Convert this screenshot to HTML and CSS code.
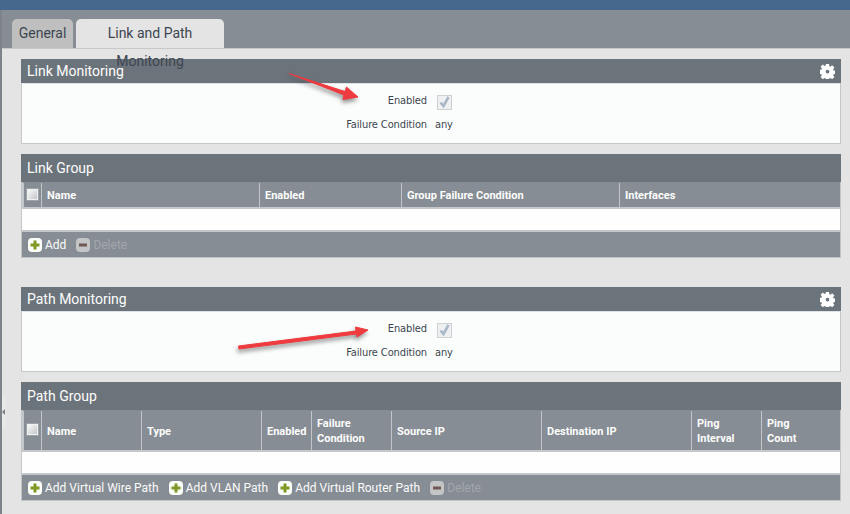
FILE: index.html
```html
<!DOCTYPE html>
<html lang="en">
<head>
<meta charset="utf-8">
<title>Link and Path Monitoring</title>
<link rel="stylesheet" href="styles.css">
</head>
<body>
<svg width="0" height="0" class="defs">
  <defs>
    <symbol id="gear" viewBox="0 0 16 16">
      <path fill="#fff" fill-rule="evenodd" d="M6.300 0h3.400l.3 2.300 1.100.5 1.900-1.400 2.400 2.400-1.400 1.900.5 1.100 2.300.3v3.400l-2.300.3-.5 1.100 1.400 1.900-2.400 2.400-1.900-1.400-1.100.5-.3 2.300H6.300l-.3-2.300-1.100-.5-1.900 1.400-2.400-2.400 1.400-1.900-.5-1.100-2.300-.3V6.300l2.300-.3.5-1.100-1.400-1.900 2.400-2.400 1.900 1.400 1.100-.5zM8 6a2 2 0 1 0 0 4 2 2 0 0 0 0-4z"/>
    </symbol>
    <symbol id="plus" viewBox="0 0 14 14">
      <rect x="0" y="0" width="14" height="14" rx="4" fill="#fbfdf8"/>
      <path fill="#7f9a22" d="M5.500 2.500h3v3h3v3h-3v3h-3v-3h-3v-3h3z"/>
    </symbol>
    <symbol id="minus" viewBox="0 0 14 14">
      <rect x="0" y="0" width="14" height="14" rx="4" fill="#c3c5c7"/>
      <rect x="3" y="5.500" width="8" height="3" fill="#6e5a52"/>
    </symbol>
    <symbol id="check" viewBox="0 0 15 15">
      <rect x="0.500" y="0.500" width="14" height="14" fill="#eef0f2" stroke="#cdd1d4"/>
      <path fill="none" stroke="#a9b8c6" stroke-width="2.600" d="M3.500 7.500l3 3.500 5-9"/>
    </symbol>
  </defs>
</svg>
<div class="topbar"></div>
<div class="dialog">
  <nav class="tabs">
    <div class="tab">General</div>
    <div class="tab tab-active">Link and Path Monitoring</div>
  </nav>
  <main class="content">
    <section class="panel">
      <header class="panel-title panel-title-short"><span>Link Monitoring</span><svg class="gear"><use href="#gear"/></svg></header>
      <div class="form">
        <div class="form-row"><span class="form-label">Enabled</span><svg class="check"><use href="#check"/></svg></div>
        <div class="form-row"><span class="form-label">Failure Condition</span><span class="form-value">any</span></div>
      </div>
    </section>
    <section class="panel panel-group">
      <header class="panel-title"><span>Link Group</span></header>
      <div class="grid-head link-cols">
        <div class="cell cell-check"><span class="head-check"></span></div>
        <div class="cell">Name</div>
        <div class="cell">Enabled</div>
        <div class="cell">Group Failure Condition</div>
        <div class="cell">Interfaces</div>
      </div>
      <div class="grid-body"></div>
      <div class="toolbar">
        <span class="tool"><svg class="tool-icon"><use href="#plus"/></svg>Add</span>
        <span class="tool tool-off"><svg class="tool-icon"><use href="#minus"/></svg>Delete</span>
      </div>
    </section>
    <section class="panel panel-second">
      <header class="panel-title panel-title-short"><span>Path Monitoring</span><svg class="gear"><use href="#gear"/></svg></header>
      <div class="form">
        <div class="form-row"><span class="form-label">Enabled</span><svg class="check"><use href="#check"/></svg></div>
        <div class="form-row"><span class="form-label">Failure Condition</span><span class="form-value">any</span></div>
      </div>
    </section>
    <section class="panel panel-group">
      <header class="panel-title"><span>Path Group</span></header>
      <div class="grid-head grid-head-tall path-cols">
        <div class="cell cell-check"><span class="head-check"></span></div>
        <div class="cell">Name</div>
        <div class="cell">Type</div>
        <div class="cell">Enabled</div>
        <div class="cell"><span>Failure<br>Condition</span></div>
        <div class="cell">Source IP</div>
        <div class="cell">Destination IP</div>
        <div class="cell"><span>Ping<br>Interval</span></div>
        <div class="cell"><span>Ping<br>Count</span></div>
      </div>
      <div class="grid-body"></div>
      <div class="toolbar">
        <span class="tool"><svg class="tool-icon"><use href="#plus"/></svg>Add Virtual Wire Path</span>
        <span class="tool"><svg class="tool-icon"><use href="#plus"/></svg>Add VLAN Path</span>
        <span class="tool"><svg class="tool-icon"><use href="#plus"/></svg>Add Virtual Router Path</span>
        <span class="tool tool-off"><svg class="tool-icon"><use href="#minus"/></svg>Delete</span>
      </div>
    </section>
  </main>
</div>
<div class="collapse-handle"></div>
<svg class="annotation" viewBox="0 0 850 514">
  <path d="M289 73.500L345 91.500 346.500 87 358 97 343 99.500 344 95z" fill="#ee3b3f" stroke="#ee3b3f" stroke-width="1" stroke-linejoin="round"/>
  <path d="M238.500 346L356 331 355.500 327 368 330 357 337 356.500 334 239 349z" fill="#ee3b3f" stroke="#ee3b3f" stroke-width="1" stroke-linejoin="round"/>
</svg>
</body>
</html>
```
FILE: styles.css
```css
* { box-sizing: border-box; }
html, body { margin: 0; padding: 0; }
body {
  width: 850px;
  height: 514px;
  overflow: hidden;
  position: relative;
  background: #e4e4e4;
  font-family: "DejaVu Sans Condensed", "DejaVu Sans", sans-serif;
  font-stretch: condensed;
  color: #3d4650;
}
.defs { position: absolute; }
.topbar { height: 10px; background: #46688d; }
.dialog { border-left: 2px solid #7e8389; height: 504px; }
.tabs {
  height: 38px;
  background: #878d94;
  padding: 9px 0 0 10px;
  display: flex;
  gap: 3px;
  align-items: stretch;
}
.tab {
  width: 61px;
  background: #bfbfbf;
  border-radius: 5px 5px 0 0;
  font-family: "Liberation Sans Narrow", Roboto, sans-serif;
  font-stretch: normal;
  font-size: 14px;
  line-height: 28px;
  text-align: center;
  color: #3d4650;
}
.tab-active { width: 148px; background: #e4e4e4; }
.content {
  border-top: 1px solid #c6c8ca;
  padding: 10px 9px 0 19px;
}
.panel-group { margin-top: 10px; }
.panel-second { margin-top: 29px; }
.panel-title {
  height: 28px;
  background: #6c747b;
  color: #fdfdfd;
  font-family: "Liberation Sans Narrow", Roboto, sans-serif;
  font-stretch: normal;
  font-size: 14px;
  padding: 0 6px;
  display: flex;
  justify-content: space-between;
  align-items: center;
}
.panel-title-short { height: 24px; }
.gear { width: 15px; height: 15px; }
.form {
  height: 61px;
  background: #fbfdfc;
  border: 1px solid #c4c8cb;
  border-top-color: #dfe3e6;
  padding-top: 4px;
  display: flex;
  flex-direction: column;
}
.form-row {
  height: 24px;
  display: flex;
  align-items: center;
  font-size: 11px;
  letter-spacing: -.12px;
}
.form-label { width: 405px; text-align: right; }
.form-value { margin-left: 8px; }
.check { width: 15px; height: 15px; margin: 4px 0 0 10px; }
.grid-head {
  height: 27px;
  background: #878d94;
  border-left: 2px solid #c2c6c9;
  border-right: 1px solid #c2c6c9;
  border-bottom: 2px solid #c4c8cb;
  display: grid;
  color: #fdfdfd;
  font-family: Roboto, sans-serif;
  font-stretch: normal;
  font-size: 11px;
  font-weight: 700;
}
.grid-head-tall { height: 42px; }
.link-cols { grid-template-columns: 18px 218px 142px 218px 1fr; }
.path-cols { grid-template-columns: 18px 100px 120px 50px 80px 150px 150px 70px 1fr; }
.cell {
  border-left: 1px solid #c2c6c9;
  margin-top: 1px;
  padding: 1px 5px 0;
  display: flex;
  align-items: center;
  line-height: 15px;
}
.cell-check { padding: 0 0 0 3px; }
.head-check {
  width: 11px;
  height: 11px;
  margin-top: -2px;
  background: linear-gradient(135deg, #f8f8f8, #c4c6c8);
  border: 1px solid #eef0f1;
  outline: 1px solid #9da2a7;
}
.grid-body {
  height: 21px;
  background: #fdfefd;
  border-right: 1px solid #c4c8cb;
  border-left: 1px solid #c4c8cb;
}
.toolbar {
  height: 28px;
  background: #878d94;
  border: 1px solid #c0c4c7;
  border-top: 2px solid #c4c8cb;
  padding-left: 6px;
  display: flex;
  align-items: center;
  gap: 10px;
  color: #fafbfb;
  font-family: "Liberation Sans Narrow", Roboto, sans-serif;
  font-stretch: normal;
  font-size: 12px;
}
.tool { display: flex; align-items: center; gap: 3px; }
.tool-off { color: #a2a7ac; }
.tool-icon { width: 14px; height: 14px; }
.collapse-handle {
  position: absolute;
  left: 2px;
  top: 397px;
  width: 4px;
  height: 30px;
  background: #e9e9e9;
}
.collapse-handle::after {
  content: "";
  position: absolute;
  left: 0;
  top: 12px;
  border: 3px solid transparent;
  border-left-width: 0;
  border-right-color: #7c8186;
}
.annotation {
  position: absolute;
  left: 0;
  top: 0;
  width: 850px;
  height: 514px;
  pointer-events: none;
  filter: drop-shadow(-1px 3px 2px rgba(60,60,60,.55));
}
```
